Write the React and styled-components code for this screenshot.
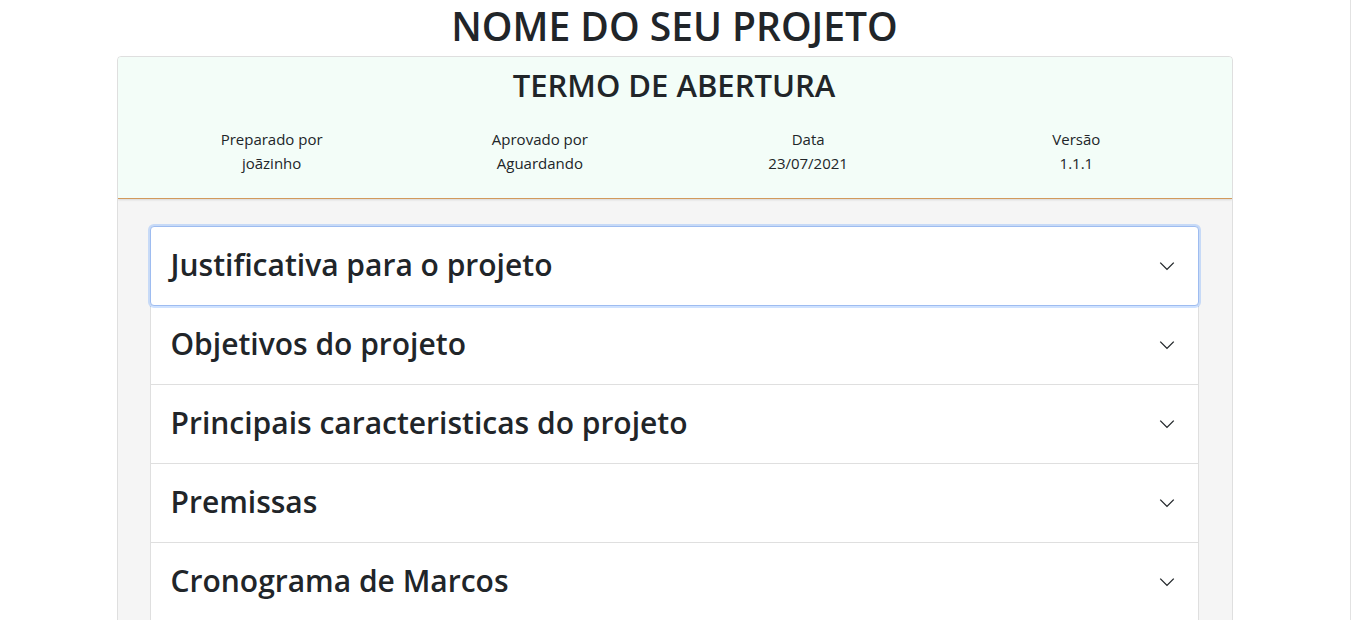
import React from 'react';
import styled, { createGlobalStyle } from 'styled-components';

const GlobalStyle = createGlobalStyle`
  html, body {
    margin: 0;
    padding: 0;
    background: #fff;
    color: #212529;
    font-family: "Open Sans", "Noto Sans", sans-serif;
    font-size: 16px;
    line-height: 1.5;
  }
  * { box-sizing: border-box; }
`;

const sections = [
  'Justificativa para o projeto',
  'Objetivos do projeto',
  'Principais caracteristicas do projeto',
  'Premissas',
  'Cronograma de Marcos',
];

const info = [
  { label: 'Preparado por', value: 'joãzinho' },
  { label: 'Aprovado por', value: 'Aguardando' },
  { label: 'Data', value: '23/07/2021' },
  { label: 'Versão', value: '1.1.1' },
];

function Chevron() {
  return (
    <svg width="18" height="18" viewBox="0 0 16 16" fill="none">
      <path d="M2 5l6 6 6-6" stroke="#212529" strokeWidth="1.2" />
    </svg>
  );
}

export default function App() {
  return (
    <Page>
      <GlobalStyle />
      <Title>NOME DO SEU PROJETO</Title>
      <Card>
        <Header>
          <Subtitle>TERMO DE ABERTURA</Subtitle>
          <InfoRow>
            {info.map((i) => (
              <InfoCol key={i.label}>
                <div>{i.label}</div>
                <div>{i.value}</div>
              </InfoCol>
            ))}
          </InfoRow>
        </Header>
        <Body>
          <Accordion>
            {sections.map((s, idx) => (
              <Item key={s} $focused={idx === 0}>
                <ItemTitle>{s}</ItemTitle>
                <Chevron />
              </Item>
            ))}
          </Accordion>
        </Body>
      </Card>
    </Page>
  );
}

const Page = styled.div`
  width: 1351px;
  height: 620px;
  overflow: hidden;
  padding-top: 1px;
  padding-right: 1px;
  border-right: 1px solid #e2e2e2;
`;

const Title = styled.h1`
  margin: 0 0 6px;
  font-size: 39px;
  font-weight: 600;
  line-height: 49px;
  text-align: center;
`;

const Card = styled.div`
  width: 1116px;
  margin: 0 auto;
  border: 1px solid rgba(0, 0, 0, 0.125);
  border-radius: 4px;
  overflow: hidden;
`;

const Header = styled.div`
  background: #f3fdf8;
  border-bottom: 1px solid #d29a5c;
  box-shadow: 0 1px 2px rgba(0, 0, 0, 0.12);
  position: relative;
  padding: 9px 21px 23px 20px;
`;

const Subtitle = styled.h2`
  margin: 0 0 23px;
  font-size: 31px;
  font-weight: 600;
  line-height: 38px;
  text-align: center;
`;

const InfoRow = styled.div`
  display: grid;
  grid-template-columns: repeat(4, 1fr);
`;

const InfoCol = styled.div`
  text-align: center;
  font-size: 15px;
  line-height: 24px;
`;

const Body = styled.div`
  background: #f5f5f5;
  padding: 27px 33px 40px 32px;
`;

const Accordion = styled.div`
  display: flex;
  flex-direction: column;
`;

const Item = styled.div`
  display: flex;
  align-items: center;
  justify-content: space-between;
  height: ${(p) => (p.$focused ? '80px' : '79px')};
  padding: 0 22px 0 20px;
  background: #fff;
  border: 1px solid ${(p) => (p.$focused ? '#9ebcf0' : 'rgba(0,0,0,0.125)')};
  border-top-width: ${(p) => (p.$focused ? '1px' : '0')};
  border-radius: ${(p) => (p.$focused ? '4px' : '0')};
  box-shadow: ${(p) => (p.$focused ? '0 0 0 2px rgba(13,110,253,0.2)' : 'none')};
  position: relative;
  z-index: ${(p) => (p.$focused ? 1 : 0)};
`;

const ItemTitle = styled.span`
  font-size: 30px;
  font-weight: 600;
  line-height: 1.2;
  margin-top: -2px;
`;
